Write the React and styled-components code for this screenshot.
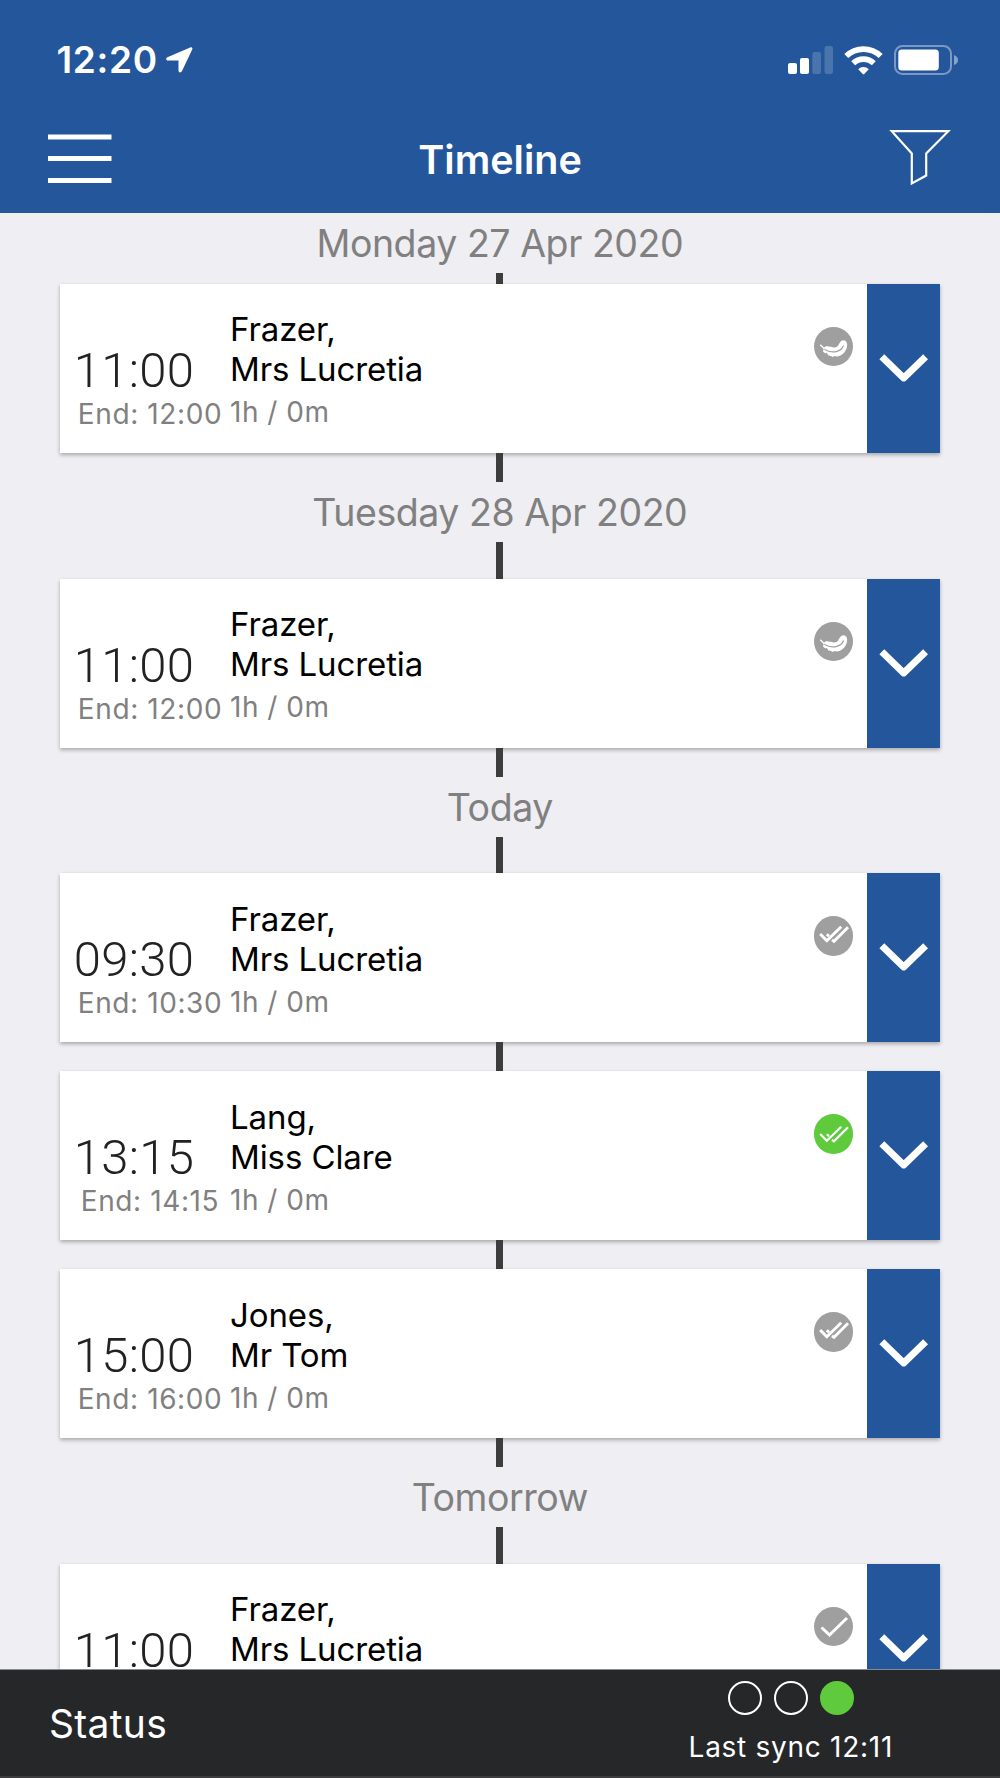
import React from "react";
import styled, { createGlobalStyle } from "styled-components";

const blue = "#23569a";
const green = "#5fca3c";
const grey = "#9f9f9f";

const GlobalStyle = createGlobalStyle`
  * {
    box-sizing: border-box;
  }
  body {
    margin: 0;
    background: #efeef3;
    font-family: Inter, "Liberation Sans", sans-serif;
  }
`;

const Screen = styled.div`
  display: flex;
  flex-direction: column;
  width: 1000px;
  height: 1778px;
  overflow: hidden;
  background: #efeef3;
`;

const Header = styled.header`
  flex: none;
  height: 212.5px;
  background: ${blue};
  color: #fff;
`;

const StatusBar = styled.div`
  display: flex;
  align-items: center;
  height: 106px;
  padding: 14px 42px 0 56.5px;
`;

const Clock = styled.span`
  display: flex;
  align-items: center;
  margin-right: auto;
  font-size: 37px;
  font-weight: 600;
  line-height: 44px;
  letter-spacing: 0.7px;
  svg {
    margin-left: 8.5px;
  }
`;

const StatusIcons = styled.div`
  display: flex;
  align-items: center;
  gap: 11px;
  svg {
    display: block;
  }
`;

const NavBar = styled.nav`
  display: grid;
  grid-template-columns: 160px 1fr 160px;
  align-items: center;
  height: 106px;
`;

const Title = styled.h1`
  margin: 0;
  padding-top: 2px;
  font-size: 39.5px;
  font-weight: 600;
  line-height: 48px;
  text-align: center;
`;

const IconButton = styled.button`
  display: flex;
  justify-content: ${props => (props.$end ? "flex-end" : "flex-start")};
  padding: ${props => (props.$end ? "0 48px 3px 0" : "0 0 0 48px")};
  border: 0;
  background: none;
  color: #fff;
`;

const List = styled.main`
  flex: 1;
  min-height: 0;
  padding-right: 0.4px;
  overflow: hidden;
`;

const DayLabel = styled.h2`
  margin: 0;
  height: 60px;
  font-size: 37.5px;
  font-weight: 400;
  line-height: 61px;
  letter-spacing: -0.45px;
  text-align: center;
  color: #808080;
`;

const Connector = styled.div`
  width: 7px;
  height: ${props => props.$size}px;
  margin: 0 auto;
  background: #3d3d3d;
`;

const Card = styled.article`
  display: flex;
  height: 169px;
  margin: 0 60px;
  background: #fff;
  box-shadow: 0 2px 4px rgba(0, 0, 0, 0.3);
`;

const Times = styled.div`
  width: 170px;
  padding-top: 58px;
  text-align: center;
`;

const Start = styled.div`
  width: 148px;
  height: 56px;
  font-family: Roboto, Inter, sans-serif;
  font-size: 49px;
  font-weight: 300;
  line-height: 58px;
  letter-spacing: 0.3px;
  color: #222;
`;

const End = styled.div`
  width: 180px;
  font-size: 28px;
  line-height: 32px;
  letter-spacing: 0.6px;
  color: #808080;
  white-space: nowrap;
`;

const Details = styled.div`
  flex: 1;
  padding-top: 25.4px;
`;

const Name = styled.div`
  font-size: 33px;
  line-height: 40px;
  letter-spacing: -0.1px;
  color: #000;
`;

const Duration = styled.div`
  font-size: 28px;
  line-height: 46px;
  letter-spacing: 0.5px;
  color: #808080;
`;

const Badge = styled.div`
  width: 39.5px;
  height: 39.5px;
  margin: 43px 13.5px 0 0;
  border-radius: 50%;
  background: ${props => (props.$active ? green : grey)};
  svg {
    display: block;
  }
`;

const Expand = styled.button`
  width: 72.7px;
  padding: 0;
  border: 0;
  background: ${blue};
  svg {
    display: block;
  }
`;

const Footer = styled.footer`
  display: flex;
  flex: none;
  justify-content: space-between;
  height: 109px;
  padding: 0 107px 0 49px;
  border-top: 1px solid #8a8a8c;
  border-bottom: 2px solid #3c3c3e;
  background: #262729;
  color: #fff;
`;

const StatusText = styled.span`
  font-size: 39px;
  line-height: 107px;
  letter-spacing: 0.3px;
`;

const Sync = styled.div`
  display: flex;
  flex-direction: column;
  align-items: center;
  padding-top: 11px;
`;

const Dots = styled.div`
  display: flex;
  gap: 12px;
`;

const Dot = styled.i`
  width: 34px;
  height: 34px;
  border: 2px solid ${props => (props.$on ? green : "#fff")};
  border-radius: 50%;
  background: ${props => (props.$on ? green : "transparent")};
`;

const SyncText = styled.span`
  margin-top: 15px;
  font-size: 28px;
  line-height: 34px;
  letter-spacing: 0.72px;
`;

const LocationIcon = () => (
  <svg width="27" height="26" viewBox="0 0 27 26" fill="#fff">
    <path d="M24.2.4 1.4 10.2C-.4 11-.1 13.4 1.8 13.4H12.5V23.5C12.5 25.7 15 26 15.9 24.3L26.2 2.6C26.9 1 25.7-.2 24.2.4Z" />
  </svg>
);

const SignalIcon = () => (
  <svg width="45" height="28" viewBox="0 0 45 28" fill="#fff">
    <rect x="0" y="17" width="9" height="11" rx="2" />
    <rect x="12" y="12" width="9" height="16" rx="2" />
    <rect x="24.3" y="6" width="8.7" height="22" rx="2" opacity=".18" />
    <rect x="36.5" y="0" width="8.5" height="28" rx="2" opacity=".18" />
  </svg>
);

const WifiIcon = () => (
  <svg width="39" height="29" viewBox="0 0 39 29">
    <g fill="none" stroke="#fff" strokeWidth="5.6">
      <path d="M2.3 10.1A24.6 24.6 0 0 1 36.7 10.1" />
      <path d="M9.2 17.3A14.8 14.8 0 0 1 29.8 17.3" />
    </g>
    <path
      d="M14.2 23.2A7.8 7.8 0 0 1 24.8 23.2L20.3 28Q19.5 28.8 18.7 28Z"
      fill="#fff"
    />
  </svg>
);

const BatteryIcon = () => (
  <svg width="64" height="30" viewBox="0 0 64 30">
    <rect
      x="1"
      y="1"
      width="56"
      height="28"
      rx="7.5"
      fill="none"
      stroke="#fff"
      strokeWidth="2"
      opacity=".4"
    />
    <rect x="4.3" y="4.5" width="40.5" height="21" rx="3.5" fill="#fff" />
    <path d="M60 10Q64 11.5 64 15T60 20Z" fill="#fff" opacity=".45" />
  </svg>
);

const MenuIcon = () => (
  <svg width="64" height="50" viewBox="0 0 64 50" fill="#fff">
    <rect y="0.5" width="63.5" height="5" />
    <rect y="22" width="63.5" height="5" />
    <rect y="44" width="63.5" height="5" />
  </svg>
);

const FilterIcon = () => (
  <svg width="63" height="57" viewBox="0 0 63 57">
    <path
      d="M2.7 2.2H59.3L37.2 24.5V46.5L22.8 54.4V24.5Z"
      fill="none"
      stroke="#fff"
      strokeWidth="2.2"
    />
  </svg>
);

const ChevronIcon = () => (
  <svg width="73" height="169" viewBox="0 0 73 169">
    <path
      d="M14.8 72.7 36.7 93.9 58.6 72.7"
      fill="none"
      stroke="#fff"
      strokeWidth="7"
      strokeLinejoin="round"
    />
  </svg>
);

const FeatherIcon = () => (
  <svg width="40" height="40" viewBox="0 0 40 40">
    <path
      d="M10 20.5 12.5 19 14.5 19.5 17 19.8 19.5 20.5 22 20.2C25 19.5 25 14 29 13.2 33 13 34 17 32.5 21.5 31 26 27 29 23 29.5L20.5 29 19 30 17 29 14.5 28.5 12.5 25.8 11.3 26.5 9 24.5Z"
      fill="#fff"
    />
    <path
      d="M7 18.5C11 23.5 17 26 23 24.3 26.5 23.3 28.5 21.2 29.5 18.5"
      fill="none"
      stroke={grey}
      strokeWidth="1.2"
    />
    <path d="M6.3 17.8 10.5 22" stroke="#fff" strokeWidth="1.3" />
  </svg>
);

const CheckIcon = () => (
  <svg width="40" height="40" viewBox="0 0 40 40">
    <path
      d="M7.5 20.5 15.5 28 33 11"
      fill="none"
      stroke="#fff"
      strokeWidth="3"
    />
  </svg>
);

const DoubleCheckIcon = ({ active }) => (
  <svg width="40" height="40" viewBox="0 0 40 40">
    <g
      fill="none"
      stroke="#fff"
      strokeWidth={active ? 2.2 : 2.9}
      transform={active ? "translate(0 2)" : undefined}
    >
      <path d="M6.2 18 12.8 24.8 27.2 10.8" />
      <path d="M12.8 18.2 15 20.3M18 23.8 20 25.3 34 11.2" />
    </g>
  </svg>
);

const icons = {
  feather: FeatherIcon,
  check: CheckIcon,
  double: DoubleCheckIcon
};

const days = [
  {
    label: "Monday 27 Apr 2020",
    gap: 11.4,
    visits: [
      { start: "11:00", end: "12:00", last: "Frazer", first: "Mrs Lucretia", icon: "feather" }
    ]
  },
  {
    label: "Tuesday 28 Apr 2020",
    visits: [
      { start: "11:00", end: "12:00", last: "Frazer", first: "Mrs Lucretia", icon: "feather" }
    ]
  },
  {
    label: "Today",
    visits: [
      { start: "09:30", end: "10:30", last: "Frazer", first: "Mrs Lucretia", icon: "double" },
      { start: "13:15", end: "14:15", last: "Lang", first: "Miss Clare", icon: "double", active: true },
      { start: "15:00", end: "16:00", last: "Jones", first: "Mr Tom", icon: "double" }
    ]
  },
  {
    label: "Tomorrow",
    visits: [
      { start: "11:00", end: "12:00", last: "Frazer", first: "Mrs Lucretia", icon: "check" }
    ]
  }
];

const Visit = ({ start, end, last, first, icon, active }) => {
  const Icon = icons[icon];
  return (
    <>
      <Card>
        <Times>
          <Start>{start}</Start>
          <End>End: {end}</End>
        </Times>
        <Details>
          <Name>{last},</Name>
          <Name>{first}</Name>
          <Duration>1h / 0m</Duration>
        </Details>
        <Badge $active={active}>
          <Icon active={active} />
        </Badge>
        <Expand aria-label="Expand">
          <ChevronIcon />
        </Expand>
      </Card>
      <Connector $size={29} />
    </>
  );
};

const App = () => (
  <>
    <GlobalStyle />
    <Screen>
      <Header>
        <StatusBar>
          <Clock>
            12:20
            <LocationIcon />
          </Clock>
          <StatusIcons>
            <SignalIcon />
            <WifiIcon />
            <BatteryIcon />
          </StatusIcons>
        </StatusBar>
        <NavBar>
          <IconButton aria-label="Menu">
            <MenuIcon />
          </IconButton>
          <Title>Timeline</Title>
          <IconButton $end aria-label="Filter">
            <FilterIcon />
          </IconButton>
        </NavBar>
      </Header>
      <List>
        {days.map(day => (
          <section key={day.label}>
            <DayLabel>{day.label}</DayLabel>
            <Connector $size={day.gap || 36.7} />
            {day.visits.map(visit => (
              <Visit key={visit.start} {...visit} />
            ))}
          </section>
        ))}
      </List>
      <Footer>
        <StatusText>Status</StatusText>
        <Sync>
          <Dots>
            <Dot />
            <Dot />
            <Dot $on />
          </Dots>
          <SyncText>Last sync 12:11</SyncText>
        </Sync>
      </Footer>
    </Screen>
  </>
);

export default App;
